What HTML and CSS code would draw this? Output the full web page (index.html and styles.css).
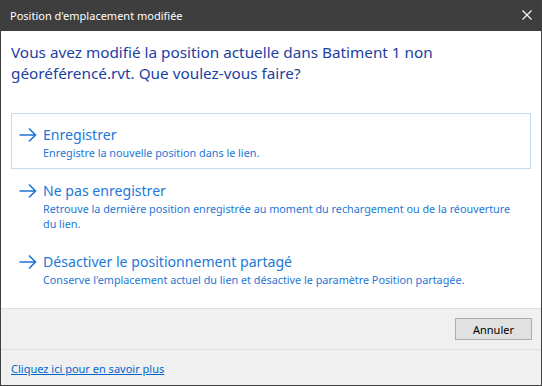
FILE: index.html
```html
<!DOCTYPE html>
<html lang="fr">
<head>
  <meta charset="UTF-8">
  <meta name="viewport" content="width=device-width, initial-scale=1.0">
  <title>Position d'emplacement modifiée</title>
  <link rel="stylesheet" href="styles.css">
</head>
<body>
  <div class="window">
    <div class="titlebar">
      <span class="titlebar-text">Position d'emplacement modifiée</span>
      <svg class="close-icon" width="10" height="10" viewBox="0 0 10 10">
        <path d="M0.5 0.5 L9.5 9.5 M9.5 0.5 L0.5 9.5" stroke="#ffffff" stroke-width="1.1" fill="none"/>
      </svg>
    </div>

    <div class="content">
      <h1 class="instruction">Vous avez modifié la position actuelle dans Batiment 1 non géoréférencé.rvt. Que voulez-vous faire?</h1>

      <div class="command-list">
        <a href="#" class="command selected">
          <svg class="arrow" width="18" height="16" viewBox="0 0 18 16">
            <path d="M0.5 8 H16.5 M10 1.5 L16.5 8 L10 14.5" stroke="#1f74d6" stroke-width="1.6" fill="none"/>
          </svg>
          <div class="command-text">
            <div class="command-title">Enregistrer</div>
            <div class="command-desc">Enregistre la nouvelle position dans le lien.</div>
          </div>
        </a>

        <a href="#" class="command">
          <svg class="arrow" width="18" height="16" viewBox="0 0 18 16">
            <path d="M0.5 8 H16.5 M10 1.5 L16.5 8 L10 14.5" stroke="#1f74d6" stroke-width="1.6" fill="none"/>
          </svg>
          <div class="command-text">
            <div class="command-title">Ne pas enregistrer</div>
            <div class="command-desc">Retrouve la dernière position enregistrée au moment du rechargement ou de la réouverture du lien.</div>
          </div>
        </a>

        <a href="#" class="command">
          <svg class="arrow" width="18" height="16" viewBox="0 0 18 16">
            <path d="M0.5 8 H16.5 M10 1.5 L16.5 8 L10 14.5" stroke="#1f74d6" stroke-width="1.6" fill="none"/>
          </svg>
          <div class="command-text">
            <div class="command-title">Désactiver le positionnement partagé</div>
            <div class="command-desc">Conserve l'emplacement actuel du lien et désactive le paramètre Position partagée.</div>
          </div>
        </a>
      </div>
    </div>

    <div class="button-bar">
      <button type="button" class="btn">Annuler</button>
    </div>

    <div class="footer">
      <a href="#" class="footer-link">Cliquez ici pour en savoir plus</a>
    </div>
  </div>
</body>
</html>
```

FILE: styles.css
```css
* {
  margin: 0;
  padding: 0;
  box-sizing: border-box;
  font-family: 'Noto Sans', 'Open Sans', sans-serif;
}

body {
  background-color: #fff;
}

.window {
  width: 542px;
  height: 386px;
  display: flex;
  flex-direction: column;
  border: 1px solid #404040;
  border-top: none;
  background-color: #f0f0f0;
}

.titlebar {
  height: 31px;
  flex-shrink: 0;
  display: flex;
  align-items: center;
  justify-content: space-between;
  padding: 0 9px 0 9px;
  background-color: #3e3e3e;
  color: #fff;
}

.titlebar-text {
  font-size: 11px;
  margin-top: -1px;
}

.close-icon {
  display: block;
  margin-top: -1px;
}

.content {
  background-color: #fff;
  padding: 11px 10px 12px 10px;
  border-bottom: 1px solid #dfdfdf;
}

.instruction {
  font-size: 15.3px;
  font-weight: 400;
  line-height: 21px;
  color: #1c3fa3;
  max-width: 470px;
  margin-bottom: 29px;
}

.command-list {
  display: flex;
  flex-direction: column;
}

.command {
  display: flex;
  align-items: flex-start;
  gap: 6px;
  padding: 10px 8px 8px 7px;
  border: 1px solid transparent;
  text-decoration: none;
  color: #2277d8;
}

.command.selected {
  border-color: #c2dcf2;
}

.arrow {
  display: block;
  margin-top: 3px;
  flex-shrink: 0;
}

.command-title {
  font-size: 14.1px;
  line-height: 21px;
}

.command-desc {
  font-size: 10.8px;
  line-height: 15px;
  max-width: 478px;
}

.button-bar {
  height: 41px;
  flex-shrink: 0;
  display: flex;
  justify-content: flex-end;
  align-items: center;
  padding: 0 9px;
  border-bottom: 1px solid #dfdfdf;
}

.btn {
  width: 77px;
  height: 22px;
  background-color: #e1e1e1;
  border: 1px solid #adadad;
  font-size: 11px;
  color: #000;
  cursor: pointer;
}

.footer {
  flex: 1;
  display: flex;
  align-items: center;
  padding: 0 10px;
}

.footer-link {
  font-size: 11px;
  color: #0066cc;
  text-decoration: underline;
  margin-top: 2px;
}
```
